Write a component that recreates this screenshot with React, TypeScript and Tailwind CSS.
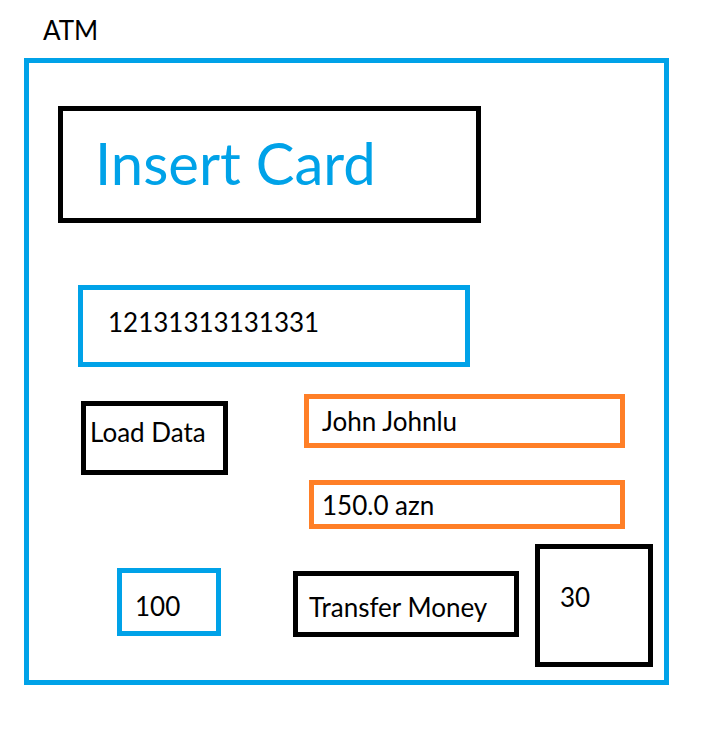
export default function App() {
  return (
    <main className="bg-white pt-3 pr-[39px] pb-14 pl-6 font-['Lato','Liberation_Sans',sans-serif] text-[26px] leading-9 text-black">
      <h1 className="mb-[10px] pl-[19px]">ATM</h1>
      <form
        aria-label="ATM"
        onSubmit={(event) => event.preventDefault()}
        className="border-5 border-[#00a2e8] pt-[43px] pr-[11px] pb-[13px]"
      >
        <div className="flex pr-[172px] pl-[29px]">
          <button
            type="button"
            className="h-[117px] flex-1 border-5 border-black px-8 pb-1 text-left text-[58px] leading-[64px] text-[#00a2e8]"
          >
            Insert Card
          </button>
        </div>

        <div className="mt-[62px] flex pr-[183px] pl-[49px]">
          <input
            type="text"
            aria-label="Card number"
            defaultValue="12131313131331"
            className="h-[82px] min-w-0 flex-1 border-5 border-[#00a2e8] px-[25px] pb-2"
          />
        </div>

        <div className="mt-[27px] flex items-start pr-7 pl-[52px]">
          <button
            type="button"
            className="mt-[7px] h-[74px] w-[147px] shrink-0 border-5 border-black pb-3 pl-1 text-left whitespace-nowrap"
          >
            Load Data
          </button>
          <div className="ml-[76px] flex flex-1 flex-col gap-8">
            <output
              aria-label="Card holder"
              className="flex h-[54px] items-center border-5 border-[#ff7f27] px-[13px]"
            >
              John Johnlu
            </output>
            <output
              aria-label="Balance"
              className="ml-[5px] flex h-[49px] items-center border-5 border-[#ff7f27] px-2"
            >
              150.0 azn
            </output>
          </div>
        </div>

        <div className="mt-[15px] flex items-start pl-[88px]">
          <input
            type="text"
            aria-label="Transfer amount"
            defaultValue="100"
            className="mt-6 h-[68px] w-[104px] border-5 border-[#00a2e8] pt-2 pl-[13px]"
          />
          <button
            type="button"
            className="mt-[27px] ml-auto h-[66px] w-[226px] shrink-0 border-5 border-black pt-[6px] pl-[11px] text-left whitespace-nowrap"
          >
            Transfer Money
          </button>
          <output
            aria-label="Result"
            className="ml-4 flex h-[123px] w-[118px] shrink-0 items-center border-5 border-black pb-[18px] pl-5"
          >
            30
          </output>
        </div>
      </form>
    </main>
  );
}
